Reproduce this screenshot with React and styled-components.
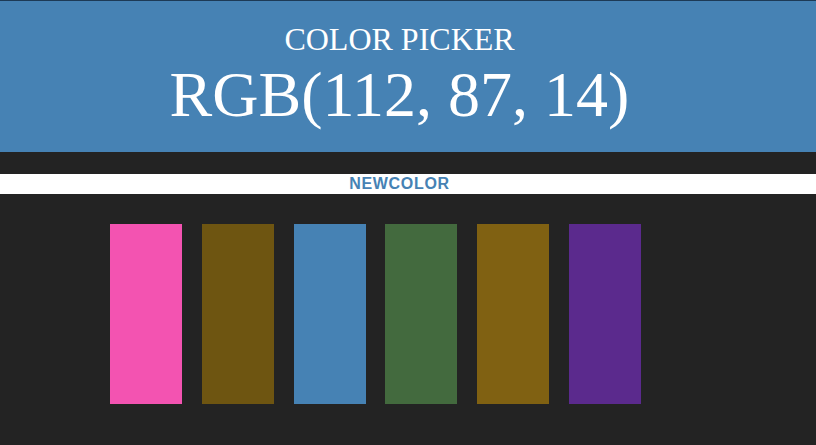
// External Dependencies
import React from 'react';
import styled, { createGlobalStyle } from 'styled-components';

// Local Variables
const GlobalStyle = createGlobalStyle`
  html, body {
    margin: 0;
    padding: 0;
    background-color: #232323;
    height: 100%;
  }
`;

const Main = styled.main`
  display: flex;
  flex-direction: column;
  min-height: 445px;
  background-color: #232323;
`;

const Header = styled.header`
  background-color: steelblue;
  border-top: 1px solid #1d3a56;
  color: white;
  text-align: center;
  padding: 20px 17px 20px 0;
  font-family: 'Liberation Serif', 'Times New Roman', serif;
  font-weight: normal;
`;

const Title = styled.h1`
  margin: 0;
  font-size: 32px;
  font-weight: normal;
  line-height: normal;
`;

const ColorDisplay = styled.span`
  display: block;
  font-size: 64px;
  line-height: normal;
`;

const Stripe = styled.div`
  background-color: white;
  margin-top: 22px;
  height: 20px;
  display: flex;
  align-items: center;
  justify-content: center;
  padding-right: 17px;
`;

const StripeButton = styled.button`
  background: none;
  border: none;
  padding: 0;
  color: steelblue;
  font-family: 'Liberation Sans', Arial, sans-serif;
  font-weight: bold;
  font-size: 16px;
  letter-spacing: 0.7px;
  text-transform: uppercase;
  cursor: pointer;
`;

const Container = styled.section`
  display: flex;
  gap: 19.8px;
  padding: 30px 0 0 110px;
`;

const Square = styled.div`
  width: 72px;
  height: 180px;
  background-color: ${props => props.color};
`;

const colors = [
  '#f353b1',
  '#6e5511',
  '#4682b4',
  '#436a3e',
  '#806112',
  '#5b2a8d',
];

// Component Definition
function App() {
  return (
    <Main>
      <GlobalStyle />
      <Header>
        <Title>COLOR PICKER</Title>
        <ColorDisplay>RGB(112, 87, 14)</ColorDisplay>
      </Header>
      <Stripe>
        <StripeButton>newcolor</StripeButton>
      </Stripe>
      <Container>
        {colors.map(c => (
          <Square key={c} color={c} />
        ))}
      </Container>
    </Main>
  );
}

export default App;
